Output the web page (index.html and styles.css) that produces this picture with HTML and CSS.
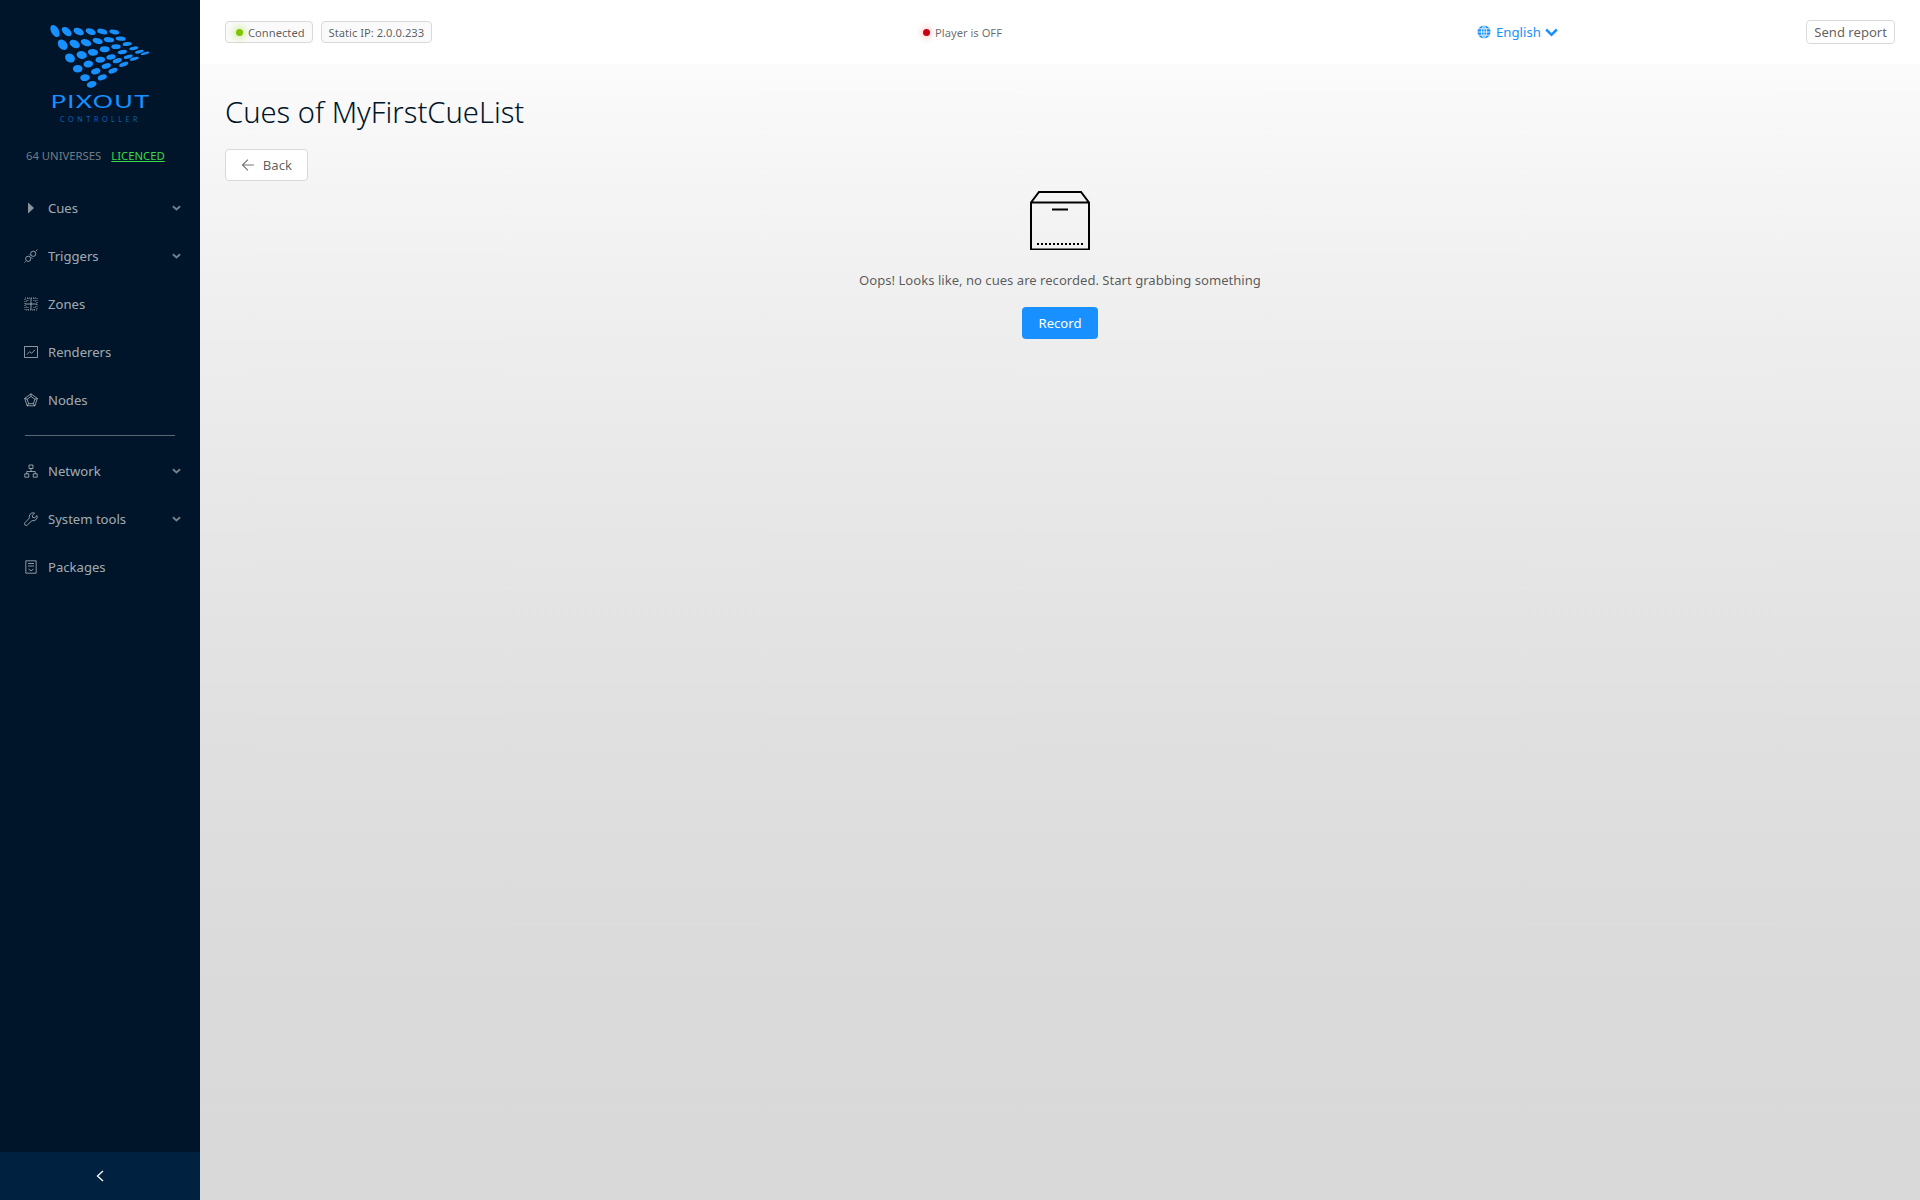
FILE: index.html
```html
<!DOCTYPE html>
<html lang="en">
<head>
<meta charset="utf-8">
<title>Cues of MyFirstCueList</title>
<link rel="stylesheet" href="styles.css">
</head>
<body>
<div class="app">
  <aside class="sider">
    <div class="logo">
      <svg class="logo-mark" width="110" height="66" viewBox="46 24 110 66">
        <g fill="#1890ff">
          <ellipse cx="55" cy="31" rx="6.6" ry="3.8" transform="rotate(60 55 31)"/>
          <ellipse cx="66.7" cy="31.6" rx="5.8" ry="3.5" transform="rotate(40 66.7 31.6)"/>
          <ellipse cx="78.7" cy="31.6" rx="5.5" ry="3.3" transform="rotate(25 78.7 31.6)"/>
          <ellipse cx="90.7" cy="31.6" rx="5.3" ry="3" transform="rotate(20 90.7 31.6)"/>
          <ellipse cx="102.3" cy="31.6" rx="5.2" ry="2.6" transform="rotate(15 102.3 31.6)"/>
          <ellipse cx="114.3" cy="32" rx="5" ry="2.2" transform="rotate(12 114.3 32)"/>
          <ellipse cx="62.7" cy="44.7" rx="5.8" ry="4.2" transform="rotate(50 62.7 44.7)"/>
          <ellipse cx="74.7" cy="44" rx="5.6" ry="3.7" transform="rotate(30 74.7 44)"/>
          <ellipse cx="86" cy="42.7" rx="5.5" ry="3.3" transform="rotate(20 86 42.7)"/>
          <ellipse cx="97.7" cy="41" rx="5.2" ry="2.9" transform="rotate(15 97.7 41)"/>
          <ellipse cx="109" cy="39.7" rx="5.1" ry="2.5" transform="rotate(6 109 39.7)"/>
          <ellipse cx="120.7" cy="38.7" rx="5" ry="2.1" transform="rotate(5 120.7 38.7)"/>
          <ellipse cx="70" cy="58" rx="5.2" ry="4.3" transform="rotate(35 70 58)"/>
          <ellipse cx="81.7" cy="55" rx="5.2" ry="3.9" transform="rotate(15 81.7 55)"/>
          <ellipse cx="93" cy="52.3" rx="5.1" ry="3.4" transform="rotate(5 93 52.3)"/>
          <ellipse cx="104.7" cy="49.3" rx="4.9" ry="3"/>
          <ellipse cx="116" cy="46.7" rx="4.7" ry="2.4"/>
          <ellipse cx="127.3" cy="44" rx="4.6" ry="1.9" transform="rotate(-5 127.3 44)"/>
          <ellipse cx="77.7" cy="68.7" rx="4.8" ry="3.8"/>
          <ellipse cx="88.3" cy="64" rx="4.8" ry="3.4" transform="rotate(-5 88.3 64)"/>
          <ellipse cx="100.3" cy="59.7" rx="4.8" ry="3" transform="rotate(-5 100.3 59.7)"/>
          <ellipse cx="111" cy="57" rx="4.7" ry="2.6" transform="rotate(-10 111 57)"/>
          <ellipse cx="122.3" cy="52" rx="4.7" ry="2.1" transform="rotate(-10 122.3 52)"/>
          <ellipse cx="133.7" cy="48.3" rx="4.6" ry="1.7" transform="rotate(-10 133.7 48.3)"/>
          <ellipse cx="85" cy="77.7" rx="4.8" ry="3.4" transform="rotate(-5 85 77.7)"/>
          <ellipse cx="95.7" cy="71.3" rx="4.7" ry="3" transform="rotate(-15 95.7 71.3)"/>
          <ellipse cx="106.3" cy="66" rx="4.7" ry="2.6" transform="rotate(-15 106.3 66)"/>
          <ellipse cx="117.3" cy="60.7" rx="4.7" ry="2.3" transform="rotate(-15 117.3 60.7)"/>
          <ellipse cx="128.3" cy="56.7" rx="4.6" ry="1.8" transform="rotate(-15 128.3 56.7)"/>
          <ellipse cx="139.3" cy="51.7" rx="4.5" ry="1.5" transform="rotate(-15 139.3 51.7)"/>
          <ellipse cx="91.7" cy="84.3" rx="5" ry="3.2" transform="rotate(-15 91.7 84.3)"/>
          <ellipse cx="102.3" cy="77.3" rx="4.7" ry="2.7" transform="rotate(-20 102.3 77.3)"/>
          <ellipse cx="113" cy="70.7" rx="4.8" ry="2.4" transform="rotate(-20 113 70.7)"/>
          <ellipse cx="123.7" cy="64.3" rx="4.8" ry="2" transform="rotate(-20 123.7 64.3)"/>
          <ellipse cx="134.3" cy="58.7" rx="4.6" ry="1.6" transform="rotate(-15 134.3 58.7)"/>
          <ellipse cx="145" cy="53.3" rx="4.4" ry="1.2" transform="rotate(-15 145 53.3)"/>
        </g>
      </svg>
      <div class="brand">PIXOUT</div>
      <div class="brand-sub">CONTROLLER</div>
    </div>
    <div class="licence"><span class="universes">64 UNIVERSES</span><a class="licenced">LICENCED</a></div>
    <nav class="menu">
      <div class="item"><svg class="ico" viewBox="0 0 14 14"><path d="M4 1.5 10 7l-6 5.5z" fill="currentColor"/></svg><span class="label">Cues</span><svg class="chev" viewBox="0 0 10 6"><path d="M1 1l4 3.6L9 1"/></svg></div>
      <div class="item"><svg class="ico" viewBox="0 0 14 14"><g class="line"><circle cx="4.2" cy="9.8" r="2.6"/><circle cx="9.2" cy="4.8" r="2.6"/><path d="M1.6 12.4.4 13.6M11.8 2.2 13.4.6M5.5 5.5l1 1M7.5 8.5l1 1"/></g></svg><span class="label">Triggers</span><svg class="chev" viewBox="0 0 10 6"><path d="M1 1l4 3.6L9 1"/></svg></div>
      <div class="item"><svg class="ico" viewBox="0 0 14 14"><g class="line"><path d="M7 1v12M1 7h12"/><path class="dots" d="M1 1h12v12H1z"/><path class="dots" d="M4 1v3H1M10 1v3h3M4 13v-3H1M10 13v-3h3"/></g></svg><span class="label">Zones</span></div>
      <div class="item"><svg class="ico" viewBox="0 0 14 14"><g class="line"><path d="M.5 1.5h13v11H.5z"/><path d="M3 9.5l2.6-2.8 2 1.6L11 4.8"/></g></svg><span class="label">Renderers</span></div>
      <div class="item"><svg class="ico" viewBox="0 0 14 14"><g class="line"><path d="M7 .8l6.3 4.6-2.4 7.4H3.100L.7 5.400z"/><path d="M7 3.400l3.900 2.800-1.500 4.500H4.600L3.100 6.200z"/><path d="M7 .8v2.600M13.300 5.400l-2.400.8M10.900 12.800 9.400 10.700M3.100 12.800l1.500-2.100M.7 5.400l2.400.8"/></g></svg><span class="label">Nodes</span></div>
      <div class="divider"></div>
      <div class="item"><svg class="ico" viewBox="0 0 14 14"><g class="line"><path d="M5 1h4v3.500H5zM.8 9.800h4v3.400h-4zM9.200 9.800h4v3.400h-4z"/><path d="M7 4.500v3M2.800 9.800V7.500h8.400v2.300"/></g></svg><span class="label">Network</span><svg class="chev" viewBox="0 0 10 6"><path d="M1 1l4 3.6L9 1"/></svg></div>
      <div class="item"><svg class="ico" viewBox="0 0 14 14"><g class="line"><path d="M9 .8a4 4 0 0 1 1.600.3L8.300 3.400l.4 2 2 .4 2.300-2.300a4 4 0 0 1-5 5.100L3.300 13a1.500 1.500 0 0 1-2.300-2.300l4.400-4.700A4 4 0 0 1 9 .8z"/></g></svg><span class="label">System tools</span><svg class="chev" viewBox="0 0 10 6"><path d="M1 1l4 3.6L9 1"/></svg></div>
      <div class="item"><svg class="ico" viewBox="0 0 14 14"><g class="line"><path d="M1.800.8h10.400v12.400H1.800z"/><path d="M4 3.500h6M4 6h6M4.500 9l2.500 1.800L9.500 9"/></g></svg><span class="label">Packages</span></div>
    </nav>
    <div class="trigger"><svg width="10" height="12" viewBox="0 0 10 12"><path d="M8 1 2.500 6 8 11" fill="none" stroke="#fff" stroke-width="1.300"/></svg></div>
  </aside>
  <main class="main">
    <header class="header">
      <div class="header-left">
        <span class="tag"><i class="dot dot-green"></i>Connected</span>
        <span class="tag">Static IP: 2.0.0.233</span>
      </div>
      <div class="player"><i class="dot dot-red"></i>Player is OFF</div>
      <div class="lang">
        <svg width="14" height="14" viewBox="0 0 14 14"><circle cx="7" cy="7" r="6.500" fill="#1890ff"/><path d="M.5 7h13M1.500 3.800h11M1.500 10.200h11M7 .5v13M7 .5C3.500 3.500 3.500 10.500 7 13.500M7 .5c3.500 3 3.500 10 0 13" fill="none" stroke="#fff" stroke-width=".8"/></svg>
        <span>English</span>
        <svg class="lang-chev" width="13" height="9" viewBox="0 0 13 9"><path d="M1.200 1.500 6.500 6.800l5.300-5.300" fill="none" stroke="#1890ff" stroke-width="2.500"/></svg>
      </div>
      <button class="report">Send report</button>
    </header>
    <section class="content">
      <h1 class="title">Cues of MyFirstCueList</h1>
      <button class="back"><svg width="14" height="14" viewBox="0 0 14 14"><path d="M13 7H1.500M7 1.500 1.500 7 7 12.500" fill="none" stroke="#777" stroke-width="1.200"/></svg>Back</button>
      <div class="empty">
        <svg class="box" width="60" height="60" viewBox="0 0 60 60"><g fill="none" stroke="#000" stroke-width="2"><path d="M1 12.500 9 2h42l8 10.500z"/><path d="M1 12.500V59.500h58V12.500"/><path d="M22 19.500h16"/><path d="M7 54h46" stroke-dasharray="2 2"/></g></svg>
        <p class="empty-text">Oops! Looks like, no cues are recorded. Start grabbing something</p>
        <button class="record">Record</button>
      </div>
    </section>
  </main>
</div>
</body>
</html>
```

FILE: styles.css
```css
* { box-sizing: border-box; }
html, body { margin: 0; height: 100%; }
body { font-family: "Noto Sans", "Open Sans", sans-serif; font-size: 13.1px; color: rgba(0,0,0,.65); }
.app { display: flex; height: 1200px; overflow: hidden; }
.sider { width: 200px; flex: none; background: #001529; display: flex; flex-direction: column; color: rgba(255,255,255,.65); }
.logo { height: 128px; padding-top: 24px; display: flex; flex-direction: column; align-items: center; }
.logo-mark { display: block; flex: none; margin-left: 1px; }
.brand { font-family: "Lato", sans-serif; font-size: 18px; line-height: 18px; letter-spacing: 1px; color: #1890ff; margin: 2px 0 0 2px; font-weight: 400; transform: scaleX(1.4); }
.brand-sub { font-family: "Lato", sans-serif; font-size: 7px; line-height: 8px; letter-spacing: 3.6px; color: #0a5fae; margin: 5px 0 0 1px; }
.licence { height: 56px; padding: 20px 0 0 26px; font-size: 11.3px; line-height: 16px; }
.universes { color: rgba(255,255,255,.45); }
.licenced { color: #3fd84a; text-decoration: underline; margin-left: 10px; }
.menu { flex: 1; display: flex; flex-direction: column; }
.item { height: 48px; display: flex; align-items: center; padding: 0 18px 0 24px; flex: none; }
.ico { width: 14px; height: 14px; flex: none; margin-right: 10px; color: rgba(255,255,255,.55); }
.line { fill: none; stroke: currentColor; stroke-width: 1; }
.dots { stroke-dasharray: 1 1; }
.label { flex: 1; }
.chev { width: 9px; height: 6px; margin-right: 1px; fill: none; stroke: rgba(255,255,255,.45); stroke-width: 2.2; }
.divider { height: 1px; background: rgba(255,255,255,.35); margin: 11px 25px 11px; flex: none; }
.trigger { height: 48px; flex: none; background: #002140; display: flex; align-items: center; justify-content: center; }
.main { flex: 1; min-width: 0; display: flex; flex-direction: column; background: linear-gradient(#fbfbfb 64px, #f4f4f4 200px, #ededed 350px, #e4e4e4 600px, #dedede 800px, #dadada 1000px, #d9d9d9 1200px); }
.header { height: 64px; flex: none; background: #fff; display: grid; grid-template-columns: 698px 554px 1fr auto; align-items: center; padding: 0 25px; }
.header-left { display: flex; gap: 8px; }
.tag { display: inline-flex; align-items: center; height: 22px; padding: 0 7px; border: 1px solid #d9d9d9; border-radius: 4px; background: #fafafa; font-size: 11.2px; color: rgba(0,0,0,.65); }
.dot { width: 7px; height: 7px; border-radius: 50%; margin-right: 5px; flex: none; }
.dot-green { background: #7ec400; box-shadow: 0 0 6px 3px rgba(140,220,0,.3); margin-left: 3px; }
.dot-red { background: #c8000f; box-shadow: 0 0 6px 3px rgba(240,0,0,.15); }
.player { display: flex; align-items: center; font-size: 11.2px; color: rgba(0,0,0,.6); }
.lang { display: flex; align-items: center; gap: 5px; color: #1890ff; font-size: 13.2px; }
.lang-chev { margin-left: -1px; }
.report { height: 24px; padding: 0 7px; border: 1px solid #d9d9d9; border-radius: 4px; background: #fff; font: inherit; color: rgba(0,0,0,.65); }
.content { flex: 1; padding: 28px 25px 24px; }
.title { margin: 0 0 17px; font-size: 29.150px; line-height: 40px; font-weight: 300; color: #001529; }
.back { display: flex; align-items: center; gap: 8px; height: 32px; width: 83px; padding: 0 15px; border: 1px solid #d9d9d9; border-radius: 4px; background: #fff; font: inherit; color: rgba(0,0,0,.65); }
.empty { display: flex; flex-direction: column; align-items: center; margin-top: 9px; }
.box { display: block; }
.empty-text { margin: 19px 0 16px; line-height: 22px; color: rgba(0,0,0,.65); }
.record { height: 32px; width: 76px; border: 0; border-radius: 4px; background: #1890ff; color: #fff; font: inherit; }
```
